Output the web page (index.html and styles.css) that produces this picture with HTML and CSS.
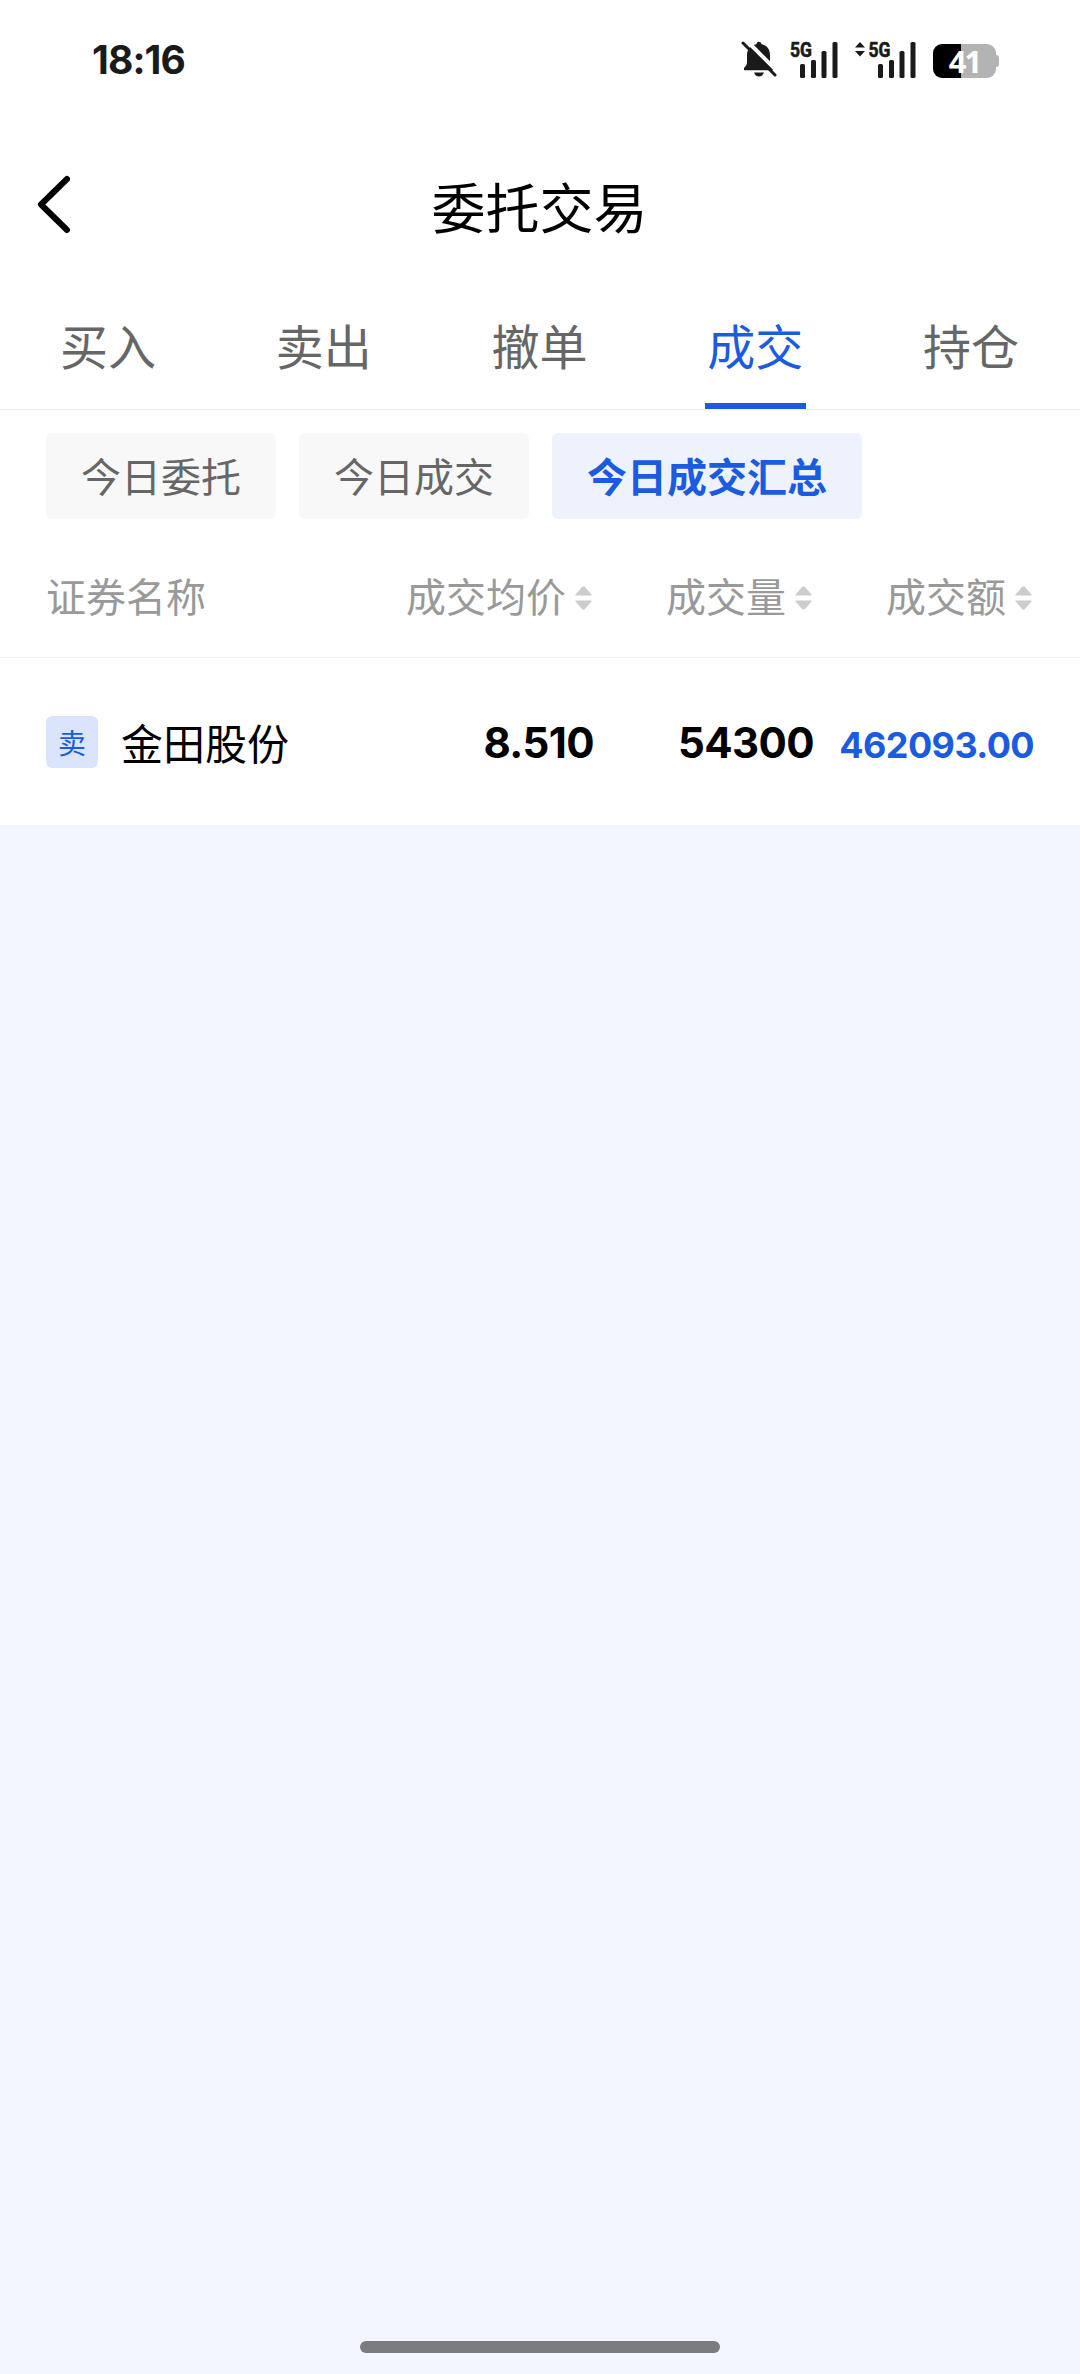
FILE: index.html
```html
<!DOCTYPE html>
<html lang="zh-CN">
<head>
  <meta charset="UTF-8">
  <meta name="viewport" content="width=device-width, initial-scale=1.0">
  <title>委托交易</title>
  <link rel="stylesheet" href="styles.css">
</head>
<body>
  <div class="status-bar">
    <span class="time">18:16</span>
    <div class="status-icons">
      <!-- muted bell -->
      <svg class="bell" width="36" height="38" viewBox="0 0 36 38">
        <path fill="#1a1a1a" d="M15.500 3.200a2.500 2.500 0 0 1 5 0C26 4.500 29 8.500 29 14v7c0 2.500 1 4 3 6v2.200H3V27c2-2 3-3.500 3-6v-7c0-5.500 3.500-9.500 9.500-10.800zM13 31.500h10c-1 2.800-2.600 4-5 4s-4-1.200-5-4z"/>
        <path stroke="#fff" stroke-width="4" d="M5-1L38 32"/>
        <path stroke="#1a1a1a" stroke-width="3" stroke-linecap="round" d="M2 2l32 32"/>
      </svg>
      <svg class="signal" width="48" height="54" viewBox="0 -8 48 54">
        <text class="net" x="0" y="16" textLength="22" lengthAdjust="spacingAndGlyphs">5G</text>
        <g fill="#1a1a1a">
          <rect x="10" y="23" width="5" height="14" rx="1.500"/>
          <rect x="21" y="19" width="5" height="18" rx="1.500"/>
          <rect x="31.500" y="10" width="5" height="27" rx="1.500"/>
          <rect x="42.500" y="1" width="5" height="36" rx="1.500"/>
        </g>
      </svg>
      <svg class="signal-data" width="62" height="54" viewBox="0 -8 62 54">
        <path fill="#1a1a1a" d="M0 6.500L5 1l5 5.500zM0 10h10l-5 5.500z"/>
        <text class="net" x="13.500" y="16" textLength="22" lengthAdjust="spacingAndGlyphs">5G</text>
        <g fill="#1a1a1a">
          <rect x="23" y="23" width="5" height="14" rx="1.500"/>
          <rect x="34" y="19" width="5" height="18" rx="1.500"/>
          <rect x="44.500" y="10" width="5" height="27" rx="1.500"/>
          <rect x="55.500" y="1" width="5" height="36" rx="1.500"/>
        </g>
      </svg>
      <div class="battery"><span class="level">41</span></div>
    </div>
  </div>

  <header class="header">
    <svg class="back" width="34" height="60" viewBox="0 0 34 60">
      <path fill="none" stroke="#000" stroke-width="6" stroke-linecap="round" stroke-linejoin="round" d="M31 5L5 30.500 31 56"/>
    </svg>
    <h1>委托交易</h1>
  </header>

  <nav class="tabs">
    <a class="tab"><span>买入</span></a>
    <a class="tab"><span>卖出</span></a>
    <a class="tab"><span>撤单</span></a>
    <a class="tab active"><span>成交</span></a>
    <a class="tab"><span>持仓</span></a>
  </nav>

  <main class="content">
    <div class="filters">
      <button type="button" class="chip">今日委托</button>
      <button type="button" class="chip">今日成交</button>
      <button type="button" class="chip active">今日成交汇总</button>
    </div>

    <div class="row table-head">
      <div class="col name">证券名称</div>
      <div class="col">成交均价<svg class="sort" width="17" height="24" viewBox="0 0 17 24"><path d="M.5 9.500v-1L7.500.5h2l7 8v1zM.5 14.500h16v1l-7 8h-2l-7-8z"/></svg></div>
      <div class="col">成交量<svg class="sort" width="17" height="24" viewBox="0 0 17 24"><path d="M.5 9.500v-1L7.500.5h2l7 8v1zM.5 14.500h16v1l-7 8h-2l-7-8z"/></svg></div>
      <div class="col">成交额<svg class="sort" width="17" height="24" viewBox="0 0 17 24"><path d="M.5 9.500v-1L7.500.5h2l7 8v1zM.5 14.500h16v1l-7 8h-2l-7-8z"/></svg></div>
    </div>

    <div class="row deal">
      <div class="col name"><span class="badge">卖</span>金田股份</div>
      <div class="col num">8.510</div>
      <div class="col num">54300</div>
      <div class="col num amount">462093.00</div>
    </div>
  </main>

  <div class="home-bar"></div>
</body>
</html>
```
FILE: styles.css
```css
* {
  box-sizing: border-box;
}

body {
  margin: 0;
  height: 2374px;
  display: flex;
  flex-direction: column;
  background-color: #f3f6fe;
  font-family: "Noto Sans CJK SC", sans-serif;
  color: #000;
}

/* status bar */
.status-bar {
  height: 120px;
  padding: 0 81px 0 92px;
  display: flex;
  justify-content: space-between;
  align-items: center;
  background-color: #fff;
}

.time {
  margin-bottom: 2px;
  font-family: Inter, sans-serif;
  font-size: 39px;
  font-weight: 700;
  color: #1a1a1a;
  letter-spacing: -0.9px;
}

.status-icons {
  display: flex;
  align-items: center;
}

.signal {
  margin-left: 13px;
}

.signal-data {
  margin-left: 17px;
}

.net {
  font-family: Roboto, sans-serif;
  font-size: 21px;
  font-weight: 700;
  fill: #1a1a1a;
  stroke: #1a1a1a;
  stroke-width: 0.6px;
}

.battery {
  position: relative;
  width: 63px;
  height: 34px;
  margin: 2px 3px 0 16px;
  border-radius: 9px;
  background: linear-gradient(to right, #000 28px, #b3b3b3 28px);
  display: flex;
  justify-content: center;
  align-items: center;
}

.battery::after {
  content: "";
  position: absolute;
  right: -3px;
  top: 11px;
  width: 3px;
  height: 12px;
  border-radius: 0 3px 3px 0;
  background-color: #b3b3b3;
}

.level {
  font-family: "Noto Sans", sans-serif;
  font-size: 31px;
  font-weight: 700;
  line-height: 34px;
  letter-spacing: -2px;
  color: #fff;
}

/* title */
.header {
  height: 168px;
  padding: 0 36px;
  display: grid;
  grid-template-columns: 34px 1fr 34px;
  align-items: center;
  background-color: #fff;
}

.header h1 {
  margin: 3px 1px 0 0;
  font-size: 54px;
  font-weight: 400;
  line-height: 80px;
  text-align: center;
}

/* tabs */
.tabs {
  height: 122px;
  padding-right: 1px;
  display: flex;
  background-color: #fff;
  border-bottom: 1px solid #f0f0f0;
}

.tab {
  flex: 1;
  display: flex;
  justify-content: center;
  font-size: 48px;
  line-height: 112px;
  color: #666;
}

.tab span {
  width: 101px;
  text-align: center;
}

.tab.active {
  color: #1b5bdf;
}

.tab.active span {
  border-bottom: 6px solid #1b5bdf;
}

.content {
  height: 415px;
  background-color: #fff;
}

/* filter chips */
.filters {
  display: flex;
  gap: 23px;
  padding: 23px 46px 0;
}

.chip {
  height: 86px;
  padding: 0 35px 2px;
  border: none;
  border-radius: 6px;
  background-color: #f8f8f8;
  font-family: inherit;
  font-size: 40px;
  color: #666;
}

.chip.active {
  background-color: #edf2fd;
  color: #1b5bdf;
  font-weight: 700;
}

/* table */
.row {
  display: grid;
  grid-template-columns: 328px 220px 220px 220px;
  align-items: center;
  padding: 0 46px;
}

.col {
  display: flex;
  align-items: center;
  justify-content: flex-end;
}

.col.name {
  justify-content: flex-start;
}

.table-head {
  height: 139px;
  padding-top: 14px;
  border-bottom: 1px solid #f2f2f2;
  font-size: 40px;
  line-height: 60px;
  color: #999;
}

.table-head .col {
  padding-right: 2px;
}

.sort {
  margin: 5px 0 0 9px;
  fill: #ccc;
}

.deal {
  height: 167px;
  font-size: 42px;
}

.badge {
  width: 52px;
  height: 52px;
  margin-right: 23px;
  border-radius: 6px;
  background-color: #dae4fa;
  font-size: 28px;
  line-height: 52px;
  text-align: center;
  color: #1b5bdf;
}

.num {
  padding-top: 2px;
  font-family: Inter, sans-serif;
  font-size: 42px;
  font-weight: 700;
  letter-spacing: -0.6px;
}

.amount {
  padding-top: 6px;
  font-size: 36px;
  color: #1b5bdf;
}

.home-bar {
  width: 360px;
  height: 12px;
  margin: auto auto 21px;
  border-radius: 6px;
  background-color: #7b7c80;
}
```
